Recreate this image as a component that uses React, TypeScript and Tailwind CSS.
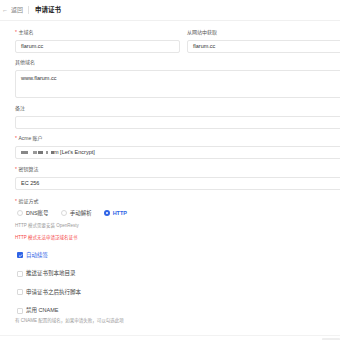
import { ReactNode } from "react";

const font = "font-['Liberation_Sans','Noto_Sans_CJK_SC',sans-serif]";

function Label({ text, required }: { text: string; required?: boolean }) {
    return (
        <div className="h-[7px] mb-[4px] flex items-center text-[5px] leading-[7px] text-[#555]">
            {required && <span className="text-[#f53f3f] mr-[1.5px]">*</span>}
            <span>{text}</span>
        </div>
    );
}

function Box({ children, tall }: { children?: ReactNode; tall?: boolean }) {
    return (
        <div
            className={
                tall
                    ? "h-[28px] border border-[#e6e6e6] rounded-[2px] px-[5px] pt-[4px] text-[5.5px] leading-[7px] text-[#333]"
                    : "h-[13px] border border-[#e6e6e6] rounded-[2px] px-[5px] flex items-center text-[5.5px] text-[#333]"
            }
        >
            {children}
        </div>
    );
}

function Check({ text, checked }: { text: string; checked?: boolean }) {
    return (
        <div className="flex items-center h-[8px] gap-[3px]">
            {checked ? (
                <div className="w-[6px] h-[6px] rounded-[1px] bg-[#2f64e6] flex items-center justify-center">
                    <svg width="5" height="5" viewBox="0 0 10 10">
                        <path d="M2 5.2 L4.2 7.3 L8 3" stroke="white" strokeWidth="1.6" fill="none" />
                    </svg>
                </div>
            ) : (
                <div className="w-[6px] h-[6px] rounded-[1px] border border-[#d9d9d9] bg-white" />
            )}
            <span className={checked ? "text-[5.5px] text-[#2f64e6]" : "text-[5.5px] text-[#444]"}>{text}</span>
        </div>
    );
}

function Radio({ text, checked }: { text: string; checked?: boolean }) {
    return (
        <div className="flex items-center gap-[3px]">
            {checked ? (
                <div className="w-[6px] h-[6px] rounded-full bg-[#2f64e6] flex items-center justify-center">
                    <div className="w-[2px] h-[2px] rounded-full bg-white" />
                </div>
            ) : (
                <div className="w-[6px] h-[6px] rounded-full border border-[#d9d9d9] bg-white" />
            )}
            <span className={checked ? "text-[5.5px] text-[#2f64e6] font-semibold" : "text-[5.5px] text-[#444]"}>{text}</span>
        </div>
    );
}

export default function App() {
    return (
        <div className={`w-[340px] h-[340px] overflow-hidden bg-white relative ${font}`}>
            <div className="h-[21px] border-b border-[#f0f0f0] flex items-center pl-[2px]">
                <span className="text-[6px] text-[#888]">←</span>
                <span className="ml-[3px] text-[6px] text-[#888]">返回</span>
                <div className="ml-[5px] w-px h-[8px] bg-[#e0e0e0]" />
                <span className="ml-[6px] text-[6.5px] font-semibold text-[#222]">申请证书</span>
            </div>

            <div className="w-[337px] ml-[15px] pt-[8px]">
                <div className="grid grid-cols-2 gap-x-[7px] mb-[6px]">
                    <div>
                        <Label text="主域名" required />
                        <Box>flarum.cc</Box>
                    </div>
                    <div>
                        <Label text="从网站中获取" />
                        <Box>flarum.cc</Box>
                    </div>
                </div>

                <div className="mb-[7px]">
                    <Label text="其他域名" />
                    <Box tall>www.flarum.cc</Box>
                </div>

                <div className="mb-[6px]">
                    <Label text="备注" />
                    <Box />
                </div>

                <div className="mb-[7px]">
                    <Label text="Acme 账户" required />
                    <Box>
                        <span className="inline-block w-[7px] h-[3px] bg-[#888]" />
                        <span className="inline-block ml-[5px] w-[4px] h-[3px] bg-[#999]" />
                        <span className="inline-block ml-[1px] w-[5px] h-[3px] bg-[#777]" />
                        <span className="inline-block ml-[3px] w-[2px] h-[3px] bg-[#999]" />
                        <span className="inline-block ml-[3px] w-[3px] h-[3px] bg-[#777]" />
                        <span>m [Let's Encrypt]</span>
                    </Box>
                </div>

                <div className="mb-[8px]">
                    <Label text="密钥算法" required />
                    <Box>EC 256</Box>
                </div>

                <Label text="验证方式" required />
                <div className="flex items-center gap-[12px] h-[8px] pl-[2px]">
                    <Radio text="DNS账号" />
                    <Radio text="手动解析" />
                    <Radio text="HTTP" checked />
                </div>
                <div className="mt-[6px] text-[4.5px] leading-[6px] text-[#999]">HTTP 模式需要安装 OpenResty</div>
                <div className="mt-[6px] text-[4.5px] leading-[6px] text-[#f53f3f]">HTTP 模式无法申请泛域名证书</div>

                <div className="mt-[10px] pl-[2px] flex flex-col gap-[10.5px]">
                    <Check text="自动续签" checked />
                    <Check text="推送证书到本地目录" />
                    <Check text="申请证书之后执行脚本" />
                    <Check text="禁用 CNAME" />
                </div>
                <div className="mt-[3px] text-[4.5px] leading-[6px] text-[#999]">有 CNAME 配置的域名，如果申请失败，可以勾选此项</div>
            </div>

            <div className="absolute left-0 right-0 top-[335px] h-[5px] border-t border-[#f2f2f2] flex justify-end">
                <div className="w-[18px] h-[3px] mt-[2px] bg-[#eeeeee] rounded-[1px]" />
            </div>
        </div>
    );
}
